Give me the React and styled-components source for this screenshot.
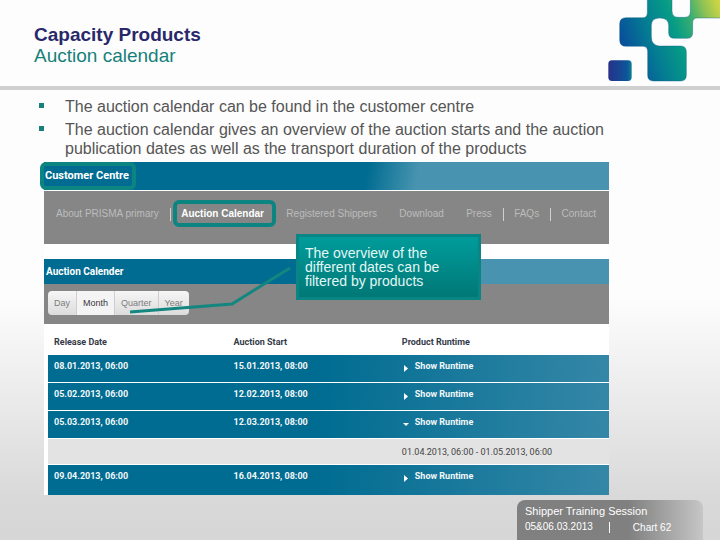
import React, { useState } from "react";
import styled, { createGlobalStyle } from "styled-components";

const navItems = [
  { label: "About PRISMA primary", divider: true },
  { label: "Auction Calendar", active: true },
  { label: "Registered Shippers" },
  { label: "Download" },
  { label: "Press", divider: true },
  { label: "FAQs", divider: true },
  { label: "Contact" },
];

const periods = ["Day", "Month", "Quarter", "Year"];

const auctions = [
  { release: "08.01.2013, 06:00", start: "15.01.2013, 08:00" },
  { release: "05.02.2013, 06:00", start: "12.02.2013, 08:00" },
  {
    release: "05.03.2013, 06:00",
    start: "12.03.2013, 08:00",
    runtime: "01.04.2013, 06:00 - 01.05.2013, 06:00",
  },
  { release: "09.04.2013, 06:00", start: "16.04.2013, 08:00" },
];

const Logo = () => (
  <LogoSvg viewBox="0 0 420 246" aria-hidden="true">
    <defs>
      <linearGradient
        id="brand"
        gradientUnits="userSpaceOnUse"
        x1="110"
        y1="130"
        x2="420"
        y2="20"
      >
        <stop offset="0" stopColor="#0a479c" />
        <stop offset="0.3" stopColor="#047b93" />
        <stop offset="0.55" stopColor="#069c86" />
        <stop offset="0.72" stopColor="#3aae70" />
        <stop offset="0.86" stopColor="#90c255" />
        <stop offset="1" stopColor="#cdd644" />
      </linearGradient>
      <linearGradient id="dot" x1="0" y1="0" x2="1" y2="0">
        <stop offset="0" stopColor="#27318a" />
        <stop offset="0.8" stopColor="#0d5599" />
        <stop offset="1" stopColor="#0d7f92" />
      </linearGradient>
    </defs>
    <path
      fill="url(#brand)"
      stroke="#12608a"
      strokeOpacity="0.4"
      strokeWidth="3"
      d="M202 -4V38Q202 53 188 53H138Q119 53 119 72V120Q119 139 138 139H188Q203 139 203 155V226Q203 243 220 243H302Q319 243 319 226V156Q319 138 302 138H238Q214 136 214 110V76Q214 54 239 54Q266 54 266 76V98Q266 115 283 115H321Q338 115 338 98V68Q338 54 352 54H424V-4H331V35Q331 52 314 52H295Q276 52 276 32V-4Z"
    />
    <rect x="85" y="181" width="70" height="62" rx="11" fill="url(#dot)" />
  </LogoSvg>
);

const App = () => {
  const [period, setPeriod] = useState("Month");
  const [open, setOpen] = useState(2);

  return (
    <Page>
      <GlobalStyle />
      <Header>
        <div>
          <Title>Capacity Products</Title>
          <Subtitle>Auction calendar</Subtitle>
        </div>
        <Logo />
      </Header>
      <Content>
        <Points>
          <li>The auction calendar can be found in the customer centre</li>
          <li>
            The auction calendar gives an overview of the auction starts and the
            auction publication dates as well as the transport duration of the
            products
          </li>
        </Points>
        <Portal>
          <PortalBar>
            <Marked>Customer Centre</Marked>
          </PortalBar>
          <Nav>
            {navItems.map((item) => (
              <NavLink
                key={item.label}
                href="#"
                $active={item.active}
                $divider={item.divider}
              >
                {item.label}
              </NavLink>
            ))}
          </Nav>
          <SectionBar>Auction Calender</SectionBar>
          <Toolbar>
            <Periods>
              {periods.map((name) => (
                <PeriodButton
                  key={name}
                  $active={period === name}
                  onClick={() => setPeriod(name)}
                >
                  {name}
                </PeriodButton>
              ))}
            </Periods>
          </Toolbar>
          <Table>
            <thead>
              <tr>
                <th>Release Date</th>
                <th>Auction Start</th>
                <th>Product Runtime</th>
              </tr>
            </thead>
            <tbody>
              {auctions.map((auction, i) => (
                <React.Fragment key={auction.release}>
                  <AuctionRow>
                    <td>{auction.release}</td>
                    <td>{auction.start}</td>
                    <td>
                      <RuntimeButton
                        aria-expanded={open === i}
                        onClick={() => setOpen(open === i ? null : i)}
                      >
                        <svg width="6" height="8" viewBox="0 0 6 8">
                          <path
                            fill="#fff"
                            d={open === i ? "M0 3H6L3 6Z" : "M1 1L5 4.5L1 8Z"}
                          />
                        </svg>
                        Show Runtime
                      </RuntimeButton>
                    </td>
                  </AuctionRow>
                  {open === i && auction.runtime && (
                    <RuntimeRow>
                      <td />
                      <td />
                      <td>{auction.runtime}</td>
                    </RuntimeRow>
                  )}
                </React.Fragment>
              ))}
            </tbody>
          </Table>
          <Pointer width="165" height="52" viewBox="0 0 165 52">
            <path d="M161 4L103 40L1 48" />
          </Pointer>
          <Callout>
            The overview of the different dates can be filtered by products
          </Callout>
        </Portal>
      </Content>
      <Footer>
        <p>Shipper Training Session</p>
        <FooterLine>
          <span>05&amp;06.03.2013</span>
          <span>Chart 62</span>
        </FooterLine>
      </Footer>
    </Page>
  );
};

const GlobalStyle = createGlobalStyle`
  * {
    box-sizing: border-box;
  }
  body, h1, h2, p, ul {
    margin: 0;
    padding: 0;
  }
  body {
    font-family: "Liberation Sans", Arial, sans-serif;
  }
  button {
    font: inherit;
    border: 0;
    cursor: pointer;
  }
`;
const Page = styled.div`
  min-height: 100vh;
  display: flex;
  flex-direction: column;
  background: linear-gradient(#fdfdfd 55%, #d9d9d9 92%, #d6d6d6);
`;
const Header = styled.header`
  display: flex;
  justify-content: space-between;
  height: 90px;
  padding: 24px 0 0 34px;
  background: #fdfdfd;
  border-bottom: 4px solid #d0d0d0;
`;
const Title = styled.h1`
  font-size: 19px;
  line-height: 21px;
  color: #28286a;
`;
const Subtitle = styled.h2`
  font-size: 19px;
  font-weight: 400;
  line-height: 21px;
  color: #16807a;
`;
const LogoSvg = styled.svg`
  width: 140px;
  height: 82px;
  margin-top: -24px;
`;
const Content = styled.main`
  padding: 7px 111px 0 44px;
`;
const Points = styled.ul`
  list-style: none;
  font-size: 16px;
  line-height: 19px;
  color: #555;
  margin-right: -8px;
  li {
    display: flex;
    margin-bottom: 4px;
  }
  li:before {
    content: "";
    flex: none;
    width: 5px;
    height: 5px;
    margin: 6px 21px 0 -5px;
    background: #16807a;
  }
`;
const Portal = styled.section`
  position: relative;
  background: #fff;
`;
const Bar = styled.div`
  display: flex;
  align-items: center;
  font-size: 10px;
  font-weight: 700;
  color: #fff;
  background: linear-gradient(100deg, #006c91 57%, #4894b0 66%);
`;
const PortalBar = styled(Bar)`
  height: 28px;
  font-size: 11px;
  font-family: Roboto, "Liberation Sans", sans-serif;
`;
const Marked = styled.span`
  margin-left: -4px;
  padding: 3px 3px 4px 1px;
  border: 4px solid #0c8582;
  border-radius: 6px;
`;
const Nav = styled.nav`
  display: flex;
  justify-content: space-between;
  align-items: center;
  height: 53px;
  margin-top: 1px;
  padding: 0 13px 8px 12px;
  background: #868686;
`;
const NavLink = styled.a`
  position: relative;
  font-size: 10px;
  font-weight: ${(props) => (props.$active ? 700 : 400)};
  color: ${(props) => (props.$active ? "#fff" : "#bcbcbc")};
  text-decoration: none;
  white-space: nowrap;
  &:before {
    content: "";
    display: ${(props) => (props.$active ? "block" : "none")};
    position: absolute;
    inset: -8px -12px -8px -8px;
    border: 4px solid #0c8582;
    border-radius: 6px;
  }
  &:after {
    content: "";
    display: ${(props) => (props.$divider ? "block" : "none")};
    position: absolute;
    top: 0;
    right: -12px;
    width: 1px;
    height: 13px;
    background: #d0d0d0;
  }
`;
const SectionBar = styled(Bar)`
  height: 25px;
  margin-top: 15px;
  padding-left: 2px;
  font-family: Roboto, "Liberation Sans", sans-serif;
`;
const Toolbar = styled.div`
  height: 40px;
  padding: 7px 4px;
  background: #868686;
`;
const Periods = styled.div`
  display: inline-flex;
  height: 24px;
  border-radius: 4px;
  overflow: hidden;
`;
const PeriodButton = styled.button`
  padding: 0 6px;
  font-size: 9px;
  color: ${(props) => (props.$active ? "#3c3440" : "#7c7c7c")};
  background: ${(props) =>
    props.$active ? "#f4f4f4" : "linear-gradient(#f6f6f6, #dcdcdc)"};
  & + & {
    border-left: 1px solid #cfcfcf;
  }
`;
const Table = styled.table`
  width: 100%;
  padding-left: 4px;
  border-spacing: 0;
  table-layout: fixed;
  font-family: Roboto, "Liberation Sans", sans-serif;
  font-size: 9px;
  th,
  td {
    padding: 0 0 0 6px;
    text-align: left;
  }
  th {
    height: 31px;
    padding-top: 4px;
    color: #333a48;
  }
  th:nth-child(2) {
    width: 30%;
  }
  th:last-child {
    width: 38%;
  }
`;
const AuctionRow = styled.tr`
  height: 28px;
  font-weight: 700;
  color: #f2f8fa;
  background: linear-gradient(95deg, #006c91 48%, #3587a7);
  td {
    padding-bottom: 5px;
    border-bottom: 1px solid #fff;
  }
  &:last-child {
    height: 30px;
  }
  &:last-child td {
    border-bottom: 0;
    padding-bottom: 8px;
  }
`;
const RuntimeRow = styled.tr`
  height: 26px;
  color: #444;
  background: #e3e3e3;
  td {
    border-bottom: 1px solid #fff;
  }
`;
const RuntimeButton = styled.button`
  display: flex;
  align-items: center;
  gap: 6px;
  padding: 0 1px;
  color: inherit;
  background: none;
  svg {
    margin-top: 3px;
  }
`;
const Pointer = styled.svg`
  position: absolute;
  top: 102px;
  left: 85px;
  fill: none;
  stroke: #138680;
  stroke-width: 3;
`;
const Callout = styled.p`
  position: absolute;
  top: 72px;
  left: 252px;
  width: 185px;
  padding: 9px 30px 9px 6px;
  border: 3px solid #0a8583;
  background: linear-gradient(#009c9b, #007877);
  font-size: 14px;
  line-height: 14px;
  color: #e4f6f5;
`;
const Footer = styled.footer`
  align-self: flex-end;
  width: 186px;
  margin: auto 17px 0 0;
  padding: 3px 8px 5px;
  border-radius: 8px 8px 0 0;
  background: linear-gradient(90deg, #808080 60%, #c6c6c6);
  font-size: 11px;
  line-height: 16px;
  color: #fff;
`;
const FooterLine = styled.p`
  display: flex;
  align-items: center;
  font-size: 10px;
  span + span {
    margin-left: 16px;
    padding-left: 23px;
    border-left: 1px solid #fff;
    line-height: 11px;
  }
`;

export default App;
